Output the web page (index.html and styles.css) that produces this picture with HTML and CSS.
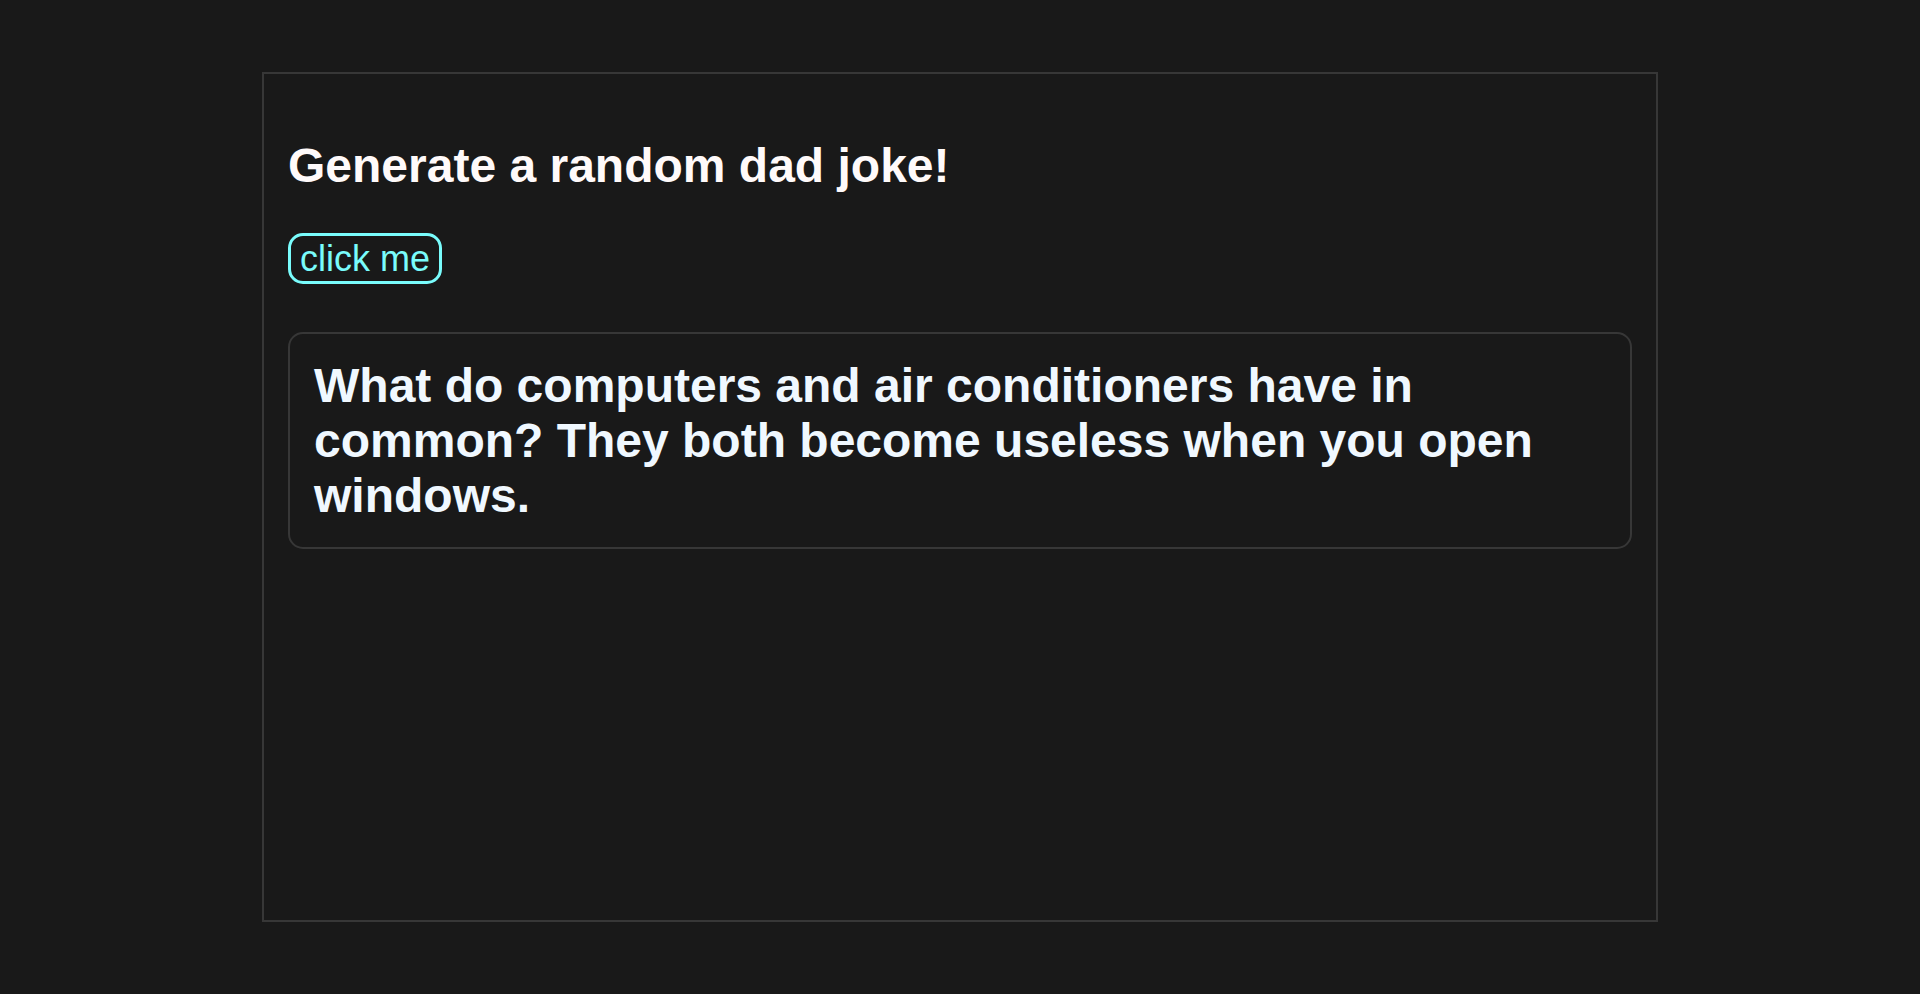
FILE: index.html
```
<!DOCTYPE html>
<html lang="en">
<head>
<meta charset="utf-8">
<title>Dad jokes</title>
<link rel="stylesheet" href="styles.css">
</head>
<body>
<main class="panel">
<h1 class="title">Generate a random dad joke!</h1>
<button class="btn" type="button">click me</button>
<section class="joke"><h2 class="joke-text">What do computers and air conditioners have in common? They both become useless when you open windows.</h2></section>
</main>
</body>
</html>
```

FILE: styles.css
```
* { box-sizing: border-box; }

body {
  margin: 0;
  min-height: 100vh;
  padding: 72px 24px;
  display: flex;
  justify-content: center;
  background: #191919;
  color: snow;
  font-family: "Liberation Sans", Arial, sans-serif;
}

.panel {
  width: 100%;
  max-width: 1396px;
  padding: 64px 24px 24px;
  border: 2px solid #373737;
}

.title {
  margin: 0 0 40px;
  font-size: 48px;
  line-height: 55px;
}

.btn {
  display: block;
  padding: 2px 9px;
  border: 3px solid #79fcfc;
  border-radius: 15px;
  background: transparent;
  color: #79fcfc;
  font-family: inherit;
  font-size: 36px;
  line-height: 41px;
}

.joke {
  margin-top: 48px;
  padding: 24px;
  border: 2px solid #373737;
  border-radius: 15px;
}

.joke-text {
  margin: 0;
  color: aliceblue;
  font-size: 48px;
  line-height: 55px;
}
```
